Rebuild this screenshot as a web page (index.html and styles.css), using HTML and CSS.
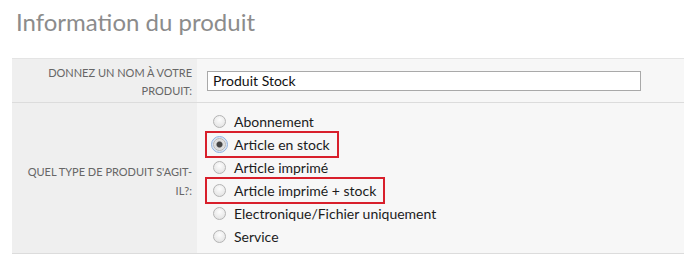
FILE: index.html
```html
<!DOCTYPE html>
<html lang="fr">
<head>
    <meta charset="UTF-8">
    <meta name="viewport" content="width=device-width, initial-scale=1.0">
    <title>Information du produit</title>
    <link rel="stylesheet" href="styles.css">
</head>
<body>
    <h1 class="section-title">Information du produit</h1>

    <div class="form-table">
        <div class="form-row">
            <label class="field-label" for="productName">Donnez un nom à votre produit:</label>
            <div class="field-value field-center">
                <input type="text" id="productName" class="text-input" value="Produit Stock">
            </div>
        </div>

        <div class="form-row">
            <div class="field-label field-label-mid">Quel type de produit s'agit-il?:</div>
            <div class="field-value">
                <div class="option-list">
                    <label class="option"><input type="radio" name="type"><span>Abonnement</span></label>
                    <label class="option marked"><input type="radio" name="type" class="focused" checked><span>Article en stock</span></label>
                    <label class="option"><input type="radio" name="type"><span>Article imprimé</span></label>
                    <label class="option marked"><input type="radio" name="type"><span>Article imprimé + stock</span></label>
                    <label class="option"><input type="radio" name="type"><span>Electronique/Fichier uniquement</span></label>
                    <label class="option"><input type="radio" name="type"><span>Service</span></label>
                </div>
            </div>
        </div>
    </div>
</body>
</html>
```

FILE: styles.css
```css
body {
    margin: 0;
    background: #fff;
    font-family: Lato, 'Open Sans', sans-serif;
    color: #333;
}

/* titre de section */
.section-title {
    margin: 8px 0 22px 16px;
    font-size: 24px;
    line-height: 28px;
    font-weight: normal;
    color: #8c8c8c;
}

/* tableau du formulaire */
.form-table {
    margin-left: 12px;
    border-top: 1px solid #e4e4e4;
}

.form-row {
    display: grid;
    grid-template-columns: 185px 1fr;
    border-bottom: 1px solid #dcdcdc;
}

.field-label {
    background: #efefef;
    padding: 5px 5px 2px 10px;
    font-size: 11px;
    line-height: 18px;
    text-transform: uppercase;
    text-align: right;
    color: #666;
}

.field-label-mid {
    display: flex;
    align-items: center;
    justify-content: flex-end;
    padding-top: 8px;
    line-height: 19px;
}

.field-value {
    background: #f7f7f7;
    padding-left: 10px;
}

.field-center {
    display: flex;
    align-items: center;
}

.text-input {
    width: 434px;
    height: 20px;
    box-sizing: border-box;
    margin: 0;
    padding: 0 5px;
    border: 1px solid #a9a9a9;
    background: #fff;
    font-family: Lato, sans-serif;
    font-size: 14px;
    color: #111;
}

/* choix du type */
.option-list {
    display: flex;
    flex-direction: column;
    align-items: flex-start;
    padding: 7px 0 5px;
}

.option {
    display: flex;
    align-items: center;
    height: 23px;
    padding: 0 7px 0 6px;
    font-size: 14px;
    color: #1c1c1c;
}

.option.marked {
    outline: 2px solid #d81f2b;
    outline-offset: 0.5px;
}

.option input {
    appearance: none;
    -webkit-appearance: none;
    width: 13px;
    height: 13px;
    margin: 0 8px 0 0;
    border: 1px solid #b4b4b4;
    border-radius: 50%;
    background: radial-gradient(circle at 50% 35%, #fdfdfd, #dedede);
}

.option input:checked {
    background: radial-gradient(circle, #444 0 2.5px, #d8d8d8 3.5px, #f2f2f2);
}

.option input.focused {
    outline: 1px solid #8fb0dc;
    outline-offset: 1px;
    box-shadow: 0 0 0 1px #d5e3f6;
}
```
